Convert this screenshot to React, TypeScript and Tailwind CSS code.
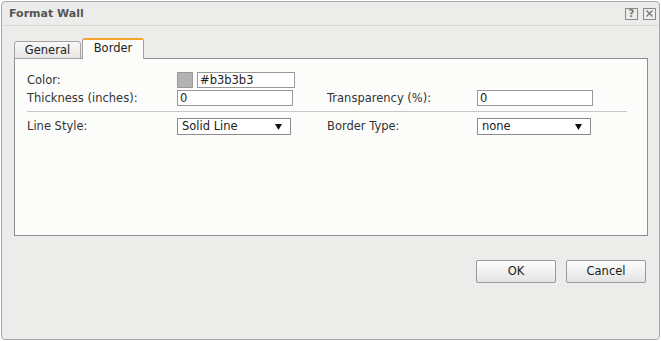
import React from "react";

const Field = ({ value, w }: { value: string; w: string }) => (
  <div
    className={`${w} h-[16px] border border-[#999] bg-white pl-[2px] text-[11.5px] leading-[14px] text-[#222]`}
  >
    {value}
  </div>
);

const Select = ({ value }: { value: string }) => (
  <div className="w-[114px] h-[17px] border border-[#8c8c8c] bg-white pl-[4px] pr-[8px] flex items-center justify-between text-[11.5px] text-[#222]">
    <span>{value}</span>
    <svg width="7" height="7" viewBox="0 0 7 7">
      <path d="M0 1 L7 1 L3.5 7 Z" fill="#111" />
    </svg>
  </div>
);

const Button = ({ label }: { label: string }) => (
  <button className="w-[80px] h-[23px] rounded-[2px] border border-[#9a9a9a] bg-gradient-to-b from-[#fdfdfd] to-[#e4e4e4] text-[11.5px] text-[#1a1a1a]">
    {label}
  </button>
);

export default function App() {
  return (
    <div
      className="w-[661px] h-[341px] bg-white p-px"
      style={{ fontFamily: '"DejaVu Sans", Verdana, sans-serif' }}
    >
      <div className="w-[659px] h-[339px] rounded-[4px] border border-[#a8a8a8] bg-[#ecedeb] flex flex-col">
        {/* title bar */}
        <div className="h-[24px] border-b border-[#d9dad8] flex items-center justify-between pl-[7px] pr-[3px]">
          <span className="text-[11px] font-bold text-[#555] pt-[1px]">Format Wall</span>
          <div className="flex gap-[5px]">
            <div className="w-[13px] h-[12px] border border-[#8a8a8a] flex items-center justify-center text-[10px] font-bold leading-none text-[#777]">
              ?
            </div>
            <div className="w-[13px] h-[12px] border border-[#8a8a8a] flex items-center justify-center">
              <svg width="7" height="7" viewBox="0 0 7 7">
                <path d="M0.5 0.5 L6.5 6.5 M6.5 0.5 L0.5 6.5" stroke="#777" strokeWidth="1.3" />
              </svg>
            </div>
          </div>
        </div>

        {/* body */}
        <div className="pl-[12px] pr-[11px] pt-[12px]">
          <div className="flex items-end gap-[1px] relative z-10 -mb-px">
            <div className="w-[67px] h-[18px] rounded-t-[3px] border border-[#a2a2a2] bg-gradient-to-b from-[#f6f7f6] to-[#e6e7e5] text-[11.5px] text-[#222] text-center leading-[17px]">
              General
            </div>
            <div className="w-[62px] h-[21px] rounded-t-[3px] border border-b-0 border-[#a2a2a2] border-t-2 border-t-[#f5a52a] bg-[#fcfdfb] text-[11.5px] text-[#222] text-center leading-[17px]">
              Border
            </div>
          </div>
          <div className="h-[178px] border border-[#8e8e8e] bg-[#fcfdfb] pl-[12px] pt-[13px] text-[11.5px] text-[#333]">
            <div className="flex items-center h-[16px]">
              <span className="w-[150px] pt-[1px]">Color:</span>
              <div className="w-[16px] h-[16px] border border-[#999] bg-[#b3b3b3] mr-[4px]" />
              <Field value="#b3b3b3" w="w-[98px]" />
            </div>
            <div className="flex items-center h-[16px] mt-[2px]">
              <span className="w-[150px] pt-[1px]">Thickness (inches):</span>
              <Field value="0" w="w-[116px]" />
              <span className="w-[150px] ml-[34px] pt-[1px]">Transparency (%):</span>
              <Field value="0" w="w-[116px]" />
            </div>
            <div className="w-[600px] h-px bg-[#c8c8c8] mt-[5px]" />
            <div className="flex items-center h-[17px] mt-[6px]">
              <span className="w-[150px] pt-[1px]">Line Style:</span>
              <Select value="Solid Line" />
              <span className="w-[150px] ml-[36px] pt-[1px]">Border Type:</span>
              <Select value="none" />
            </div>
          </div>
        </div>

        {/* footer */}
        <div className="flex justify-end gap-[10px] pr-[13px] mt-[24px]">
          <Button label="OK" />
          <Button label="Cancel" />
        </div>
      </div>
    </div>
  );
}
